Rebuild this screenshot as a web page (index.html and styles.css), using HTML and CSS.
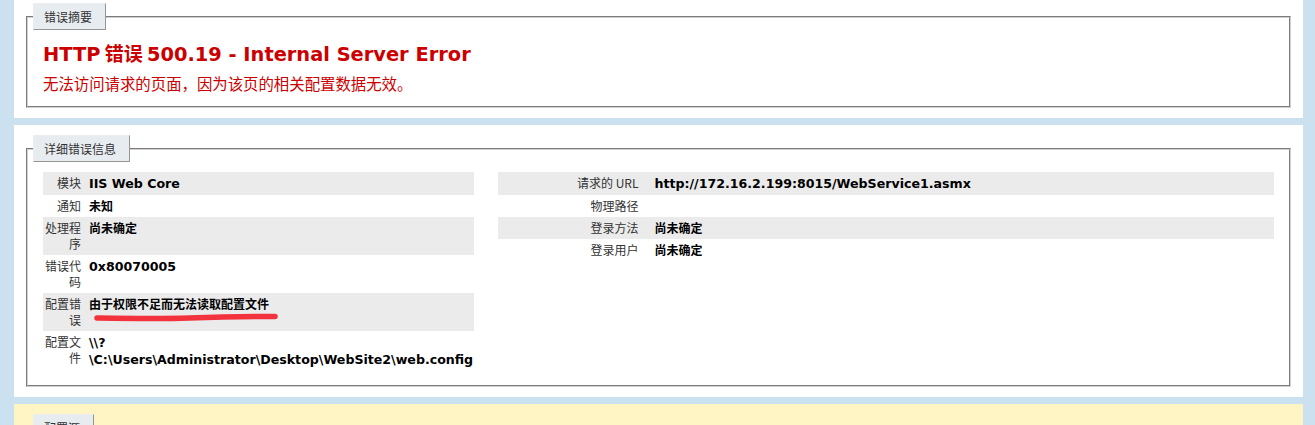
FILE: index.html
```html
<!DOCTYPE html>
<html lang="zh-CN">
<head>
<meta charset="utf-8">
<title>IIS 8.0 详细错误 - 500.19 - Internal Server Error</title>
<link rel="stylesheet" href="styles.css">
</head>
<body>
<div class="content">
  <div class="summary-container first-panel">
    <fieldset>
      <legend>错误摘要</legend>
      <h2><span class="lt">HTTP</span> 错误 <span class="lt">500.19 - Internal Server Error</span></h2>
      <h3>无法访问请求的页面，因为该页的相关配置数据无效。</h3>
    </fieldset>
  </div>

  <div class="content-container">
    <fieldset>
      <legend>详细错误信息</legend>
      <div class="details">
        <div class="details-left">
          <table class="tbl tbl-left">
            <tr class="alt"><th>模块</th><td><span class="lt">IIS Web Core</span></td></tr>
            <tr><th>通知</th><td>未知</td></tr>
            <tr class="alt"><th>处理程序</th><td>尚未确定</td></tr>
            <tr><th>错误代码</th><td><span class="lt">0x80070005</span></td></tr>
            <tr class="alt"><th>配置错误</th><td class="marked">由于权限不足而无法读取配置文件<svg class="scribble" width="200" height="14" viewBox="0 0 200 14" aria-hidden="true"><path d="M8 9 C 40 9.5, 70 10, 100 9 S 160 7.5, 186 7.5" fill="none" stroke="#f2323c" stroke-width="5.5" stroke-linecap="round"/></svg></td></tr>
            <tr><th>配置文件</th><td><span class="lt">\\?<wbr>\C:\Users\Administrator\Desktop\WebSite2\web.config</span></td></tr>
          </table>
        </div>
        <div class="details-right">
          <table class="tbl tbl-right">
            <tr class="alt"><th>请求的 URL</th><td><span class="lt">http://172.16.2.199:8015/WebService1.asmx</span></td></tr>
            <tr><th>物理路径</th><td></td></tr>
            <tr class="alt"><th>登录方法</th><td>尚未确定</td></tr>
            <tr><th>登录用户</th><td>尚未确定</td></tr>
          </table>
        </div>
      </div>
    </fieldset>
  </div>

  <div class="content-container config-source">
    <fieldset>
      <legend>配置源</legend>
      <div class="config-body"></div>
    </fieldset>
  </div>
</div>
</body>
</html>
```

FILE: styles.css
```css
html, body {
  margin: 0;
  padding: 0;
}
body {
  background: #cbe1ef;
  font-family: "DejaVu Sans", "Noto Sans CJK SC", sans-serif;
  font-size: 12px;
  line-height: 16px;
  color: #000;
}
.content {
  margin-left: 14px;
  width: 1289px;
}
.summary-container,
.content-container {
  background: #fff;
  padding: 10px;
  box-sizing: border-box;
  margin-top: 7px;
}
.first-panel {
  margin-top: 0;
  padding-top: 3px;
}
.config-source {
  background: #fff5c4;
}
fieldset {
  margin: 0 2px;
  padding: 0 15px 10px 15px;
  border: 2px groove #d0d0d0;
  min-width: 0;
}
.first-panel fieldset {
  padding-bottom: 13px;
}
legend {
  color: #333;
  font-family: "Noto Sans CJK SC", sans-serif;
  font-size: 12px;
  line-height: 17px;
  padding: 4px 13px 4px 10px;
  margin: 2px 0 7px -10px;
  border-top: 1px solid #ededed;
  border-left: 1px solid #ededed;
  border-right: 1px solid #969696;
  border-bottom: 1px solid #969696;
  background: #e7ecf0;
}
h2 {
  margin: 4px 0 0 0;
  font-size: 19px;
  line-height: 24px;
  font-weight: bold;
  color: #cc0000;
  font-family: "Noto Sans CJK SC", sans-serif;
}
h2 .lt {
  font-family: "DejaVu Sans", sans-serif;
  font-size: 19.4px;
}
h3 {
  margin: 6px 0 0 0;
  font-size: 15.4px;
  line-height: 20px;
  font-weight: normal;
  color: #cc0000;
  font-family: "Noto Sans CJK SC", sans-serif;
}
.details {
  display: flex;
  padding-bottom: 4px;
}
.details-left {
  width: 35%;
  margin-right: 2%;
}
.details-right {
  width: 63%;
  overflow: hidden;
}
.tbl {
  width: 100%;
  margin: 3px 0 0 0;
  border-collapse: collapse;
  table-layout: fixed;
}
.tbl th,
.tbl td {
  vertical-align: top;
  padding: 3px 0;
  text-align: left;
  font-size: 12px;
  line-height: 16px;
}
.tbl th {
  font-weight: normal;
  color: #333;
  text-align: right;
  font-family: "Noto Sans CJK SC", sans-serif;
  box-sizing: border-box;
}
.tbl-left th {
  width: 46px;
  padding-right: 8px;
}
.tbl-right th {
  width: 156px;
  padding-right: 16px;
}
.tbl td {
  font-weight: bold;
  font-family: "Noto Sans CJK SC", sans-serif;
}
.tbl td .lt {
  font-family: "DejaVu Sans", sans-serif;
  font-size: 12.6px;
}
.tbl tr.alt th,
.tbl tr.alt td {
  background: #ebebeb;
}
.marked {
  position: relative;
}
.scribble {
  position: absolute;
  left: 0;
  top: 16px;
  pointer-events: none;
}
.config-body {
  height: 60px;
}
```
